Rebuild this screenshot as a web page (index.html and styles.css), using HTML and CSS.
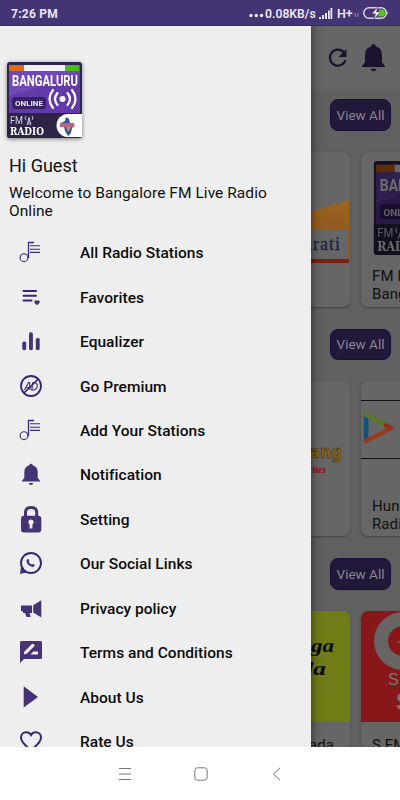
FILE: index.html
```
<!DOCTYPE html>
<html lang="en">
<head>
<meta charset="utf-8">
<title>Bangalore FM Live Radio</title>
<link rel="stylesheet" href="styles.css">
</head>
<body>
<svg class="defs" aria-hidden="true">
  <symbol id="logo" viewBox="0 0 75 76">
    <rect width="75" height="76" rx="3" fill="#2f2350"/>
    <rect x="2" y="3" width="71" height="48" fill="#7049b9"/>
    <path d="M2 34 73 12V51H2z" fill="#643aaa"/>
    <rect x="2" y="3" width="15" height="6" fill="#df6b12"/>
    <rect x="17" y="3" width="41" height="6" fill="#f2f0f5"/>
    <rect x="58" y="3" width="14" height="6" fill="#49bd15"/>
    <text x="5" y="24" font-family="Roboto" font-weight="700" font-size="14" textLength="66" lengthAdjust="spacingAndGlyphs" fill="#fff">BANGALURU</text>
    <rect x="5" y="35" width="34" height="12" rx="3" fill="#352265"/>
    <text x="8" y="44.300" font-family="Roboto" font-weight="700" font-size="8" textLength="28" lengthAdjust="spacingAndGlyphs" fill="#ece7f7">ONLINE</text>
    <circle cx="55.500" cy="37" r="3" fill="#fff"/>
    <path d="M50.500 31q-5 6 0 12M60.500 31q5 6 0 12M46 28q-7 9 0 18M65 28q7 9 0 18" fill="none" stroke="#fff" stroke-width="2.200" stroke-linecap="round"/>
    <rect y="51" width="75" height="25" rx="3" fill="#2c2347"/>
    <text x="3" y="61.500" font-family="Roboto" font-size="10" textLength="13" lengthAdjust="spacingAndGlyphs" fill="#d8d3e2">FM</text>
    <path d="M22 55v8M20 63l2-7 2 7M19 54q-2 2 0 4M25 54q2 2 0 4" fill="none" stroke="#c9c3d7"/>
    <text x="3" y="72.500" font-family="DejaVu Serif" font-weight="700" font-size="10.500" textLength="34" lengthAdjust="spacingAndGlyphs" fill="#fff">RADIO</text>
    <path d="M75 52V75H61a11.500 11.500 0 0 1 0-23z" fill="#fff"/>
    <path d="m59 55 3 2 1 4 5 2-3 3-1 5-3 3-3-5-1-5-3-3 4-2z" fill="#334f9f"/>
    <path d="M53 61h14v4H53z" fill="#b96582"/>
    <path d="M59 65h5l-3 5z" fill="#d68b5d"/>
  </symbol>
  <symbol id="music" viewBox="0 0 24 28">
    <g fill="none" stroke="#3a2b7c"><circle cx="5" cy="18.700" r="3.900" stroke-width="1.100"/><path d="M9.500 19V3.500H15" stroke-width="1.300"/><path d="M11 6.800h10M11 10.300h10M11 13.400h10" stroke-width="1.100"/></g>
  </symbol>
  <symbol id="bell" viewBox="0 0 18 22">
    <path d="M9 0q1.600 0 1.700 1.800 5 1.300 5 7.200v5.300L18 17.200V18H0v-.8L2.300 14.300V9q0-5.900 5-7.200Q7.400 0 9 0zM6.800 19.500h4.400Q10.800 21.500 9 21.500t-2.200-2z"/>
  </symbol>
</svg>

<div class="phone">
  <header class="status">
    <span class="clock">7:26 PM</span>
    <svg class="dots" viewBox="0 0 15 5"><circle cx="2" cy="2.500" r="1.700"/><circle cx="7.300" cy="2.500" r="1.700"/><circle cx="12.600" cy="2.500" r="1.700"/></svg>
    <span class="speed">0.08KB/s</span>
    <svg class="signal" viewBox="0 0 14 12"><path d="M0 9h2v2H0zM3 7h2v4H3zM6 5h2v6H6zM9 2.500h1.800V11H9zM11.500 0h1.800v11h-1.800z"/></svg>
    <span class="net">H+</span>
    <svg class="updown" viewBox="0 0 5 6"><path d="M1.200 5V1M3.800 1v4" stroke="#9a90bb" fill="none"/></svg>
    <svg class="battery" viewBox="0 0 26 12"><rect x=".8" y=".8" width="22.500" height="10.400" rx="5.200" fill="none" stroke="#d8d3e6" stroke-width="1.500"/><path d="M24.300 4v4q1.400-2 0-4z" fill="#d8d3e6"/><path d="M16 2.500h2.500a3.500 3.500 0 0 1 0 7H15z" fill="#55c811"/><path d="m14.800 0-6 6.700h3.700L11 12l6.200-7H13.400z" fill="#fff" stroke="#453473" stroke-width=".5"/></svg>
  </header>

  <main class="stage">
    <div class="page">
      <div class="toolbar">
        <svg class="refresh" viewBox="0 0 20 20"><path d="M16.300 4.800A8 8 0 1 0 17.600 12" fill="none" stroke="#1b132d" stroke-width="2.200"/><path d="M18.500 1v8h-8z" fill="#1b132d"/></svg>
        <svg class="alert" viewBox="0 0 18 22"><use href="#bell"/></svg>
      </div>

      <section class="group">
        <button class="view-all">View All</button>
        <div class="cards">
          <article class="card">
            <svg class="art" viewBox="0 0 140 111"><defs><linearGradient id="sun" x2="0" y2="1"><stop stop-color="#9b641d"/><stop offset="1" stop-color="#87501d"/></linearGradient></defs><path d="M80 66 139 48V111H80z" fill="url(#sun)"/><path d="M20 77h118v30H20z" fill="#666"/><path d="M20 107h119v4H20z" fill="#7a200d"/><text x="131" y="98" text-anchor="end" font-family="Liberation Serif" font-size="18" letter-spacing="1" fill="#1c2250" stroke="#1c2250" stroke-width=".3">Gujarati</text></svg>
          </article>
          <article class="card">
            <svg class="cover" viewBox="0 0 75 76"><use href="#logo"/></svg>
            <p class="name">FM Live<br>Bangalore</p>
          </article>
        </div>
      </section>

      <section class="group">
        <button class="view-all">View All</button>
        <div class="cards">
          <article class="card">
            <svg class="art" viewBox="0 0 140 111"><text x="132" y="77" text-anchor="end" font-family="DejaVu Sans" font-weight="700" font-size="17" textLength="44" lengthAdjust="spacingAndGlyphs" fill="#8b6413" stroke="#33270e" stroke-width=".5">Rang</text><text x="116" y="92" text-anchor="end" font-family="Liberation Serif" font-style="italic" font-weight="700" font-size="9.500" fill="#850c16">Favorites</text></svg>
          </article>
          <article class="card">
            <svg class="art" viewBox="0 0 140 111"><path d="M0 19.500h140M0 77.500h140" stroke="#111" stroke-width="1.200"/><g fill="none" stroke-width="4.500" stroke-linecap="round" stroke-linejoin="round"><path d="M5.200 34v26" stroke="#145176"/><path d="M5.200 60 30 47" stroke="#963c1c"/><path d="m5.200 34 24.800 13" stroke="#587727"/><path d="m25 44.400 5 2.600" stroke="#8c2f20"/></g></svg>
            <p class="name">Hungama<br>Radio</p>
          </article>
        </div>
      </section>

      <section class="group">
        <button class="view-all">View All</button>
        <div class="cards">
          <article class="card">
            <svg class="art" viewBox="0 0 140 111"><path d="M0 0h140v111H0z" fill="#727c17"/><g font-family="Liberation Serif" font-style="italic" font-weight="700" font-size="19" fill="#090a05" text-anchor="end"><text x="124" y="41" textLength="50" lengthAdjust="spacingAndGlyphs">Raga</text><text x="116" y="64" textLength="56" lengthAdjust="spacingAndGlyphs">Kada</text></g></svg>
            <p class="name right single">Kannada</p>
          </article>
          <article class="card">
            <svg class="art" viewBox="0 0 140 111"><path d="M0 0h140v111H0z" fill="#871719"/><circle cx="42" cy="30" r="22" fill="none" stroke="#686464" stroke-width="14"/><path d="m35 31 12-3v7z" fill="#686464"/><text x="27" y="74" font-family="Liberation Sans" font-size="16" fill="#777">S FM</text><text x="35" y="99" font-family="Liberation Sans" font-weight="700" font-size="24" fill="#777">S FM</text></svg>
            <p class="name single">S FM</p>
          </article>
        </div>
      </section>
    </div>

    <aside class="drawer">
      <svg class="logo" viewBox="0 0 75 76"><use href="#logo"/></svg>
      <h1>Hi Guest</h1>
      <p class="welcome">Welcome to Bangalore FM Live Radio<br>Online</p>
      <nav class="menu">
        <a class="item"><svg viewBox="0 0 24 28"><use href="#music"/></svg><span>All Radio Stations</span></a>
        <a class="item"><svg viewBox="0 0 24 28"><path d="M4.500 7h12.500M4.500 11.700h12.500M4.500 16.400h8" stroke="#38246f" stroke-width="2" stroke-linecap="round"/><path d="M18 21.200l-2.400-2.300q-1-1.900.7-2.600 1-.2 1.700.6.700-.8 1.700-.6 1.700.7.700 2.600z"/></svg><span>Favorites</span></a>
        <a class="item"><svg viewBox="0 0 24 28"><rect x="3.300" y="13.500" width="3.900" height="8.700" rx="1.700"/><rect x="10" y="4.200" width="3.900" height="18" rx="1.700"/><rect x="16.800" y="9.900" width="3.900" height="12.300" rx="1.700"/></svg><span>Equalizer</span></a>
        <a class="item"><svg viewBox="0 0 24 28"><circle cx="12" cy="13" r="10" fill="none" stroke="#38246f" stroke-width="1.800"/><g fill="none" stroke="#453473" stroke-width="1.200"><path d="m5.500 17 4-7.500h1l.5 7.500M7 14.500h4M13.800 9.500l-1 7.500q5 .5 5.500-4 .3-3.700-4.500-3.500z"/></g><path d="M5 20 19.200 6" stroke="#38246f" stroke-width="1.700"/></svg><span>Go Premium</span></a>
        <a class="item"><svg viewBox="0 0 24 28"><use href="#music"/></svg><span>Add Your Stations</span></a>
        <a class="item"><svg viewBox="0 0 24 28"><use href="#bell" x="3" y="2.500" width="18" height="22"/></svg><span>Notification</span></a>
        <a class="item"><svg viewBox="0 0 24 28"><path d="M6.500 11V6q.3-4.500 5.600-4.500T17.700 6v5" fill="none" stroke="#453473" stroke-width="3"/><rect x="2" y="9.700" width="20.300" height="16.700" rx="3"/><path d="M12 13.500a2.700 2.700 0 0 1 1.400 5V22.500h-2.800v-4a2.700 2.700 0 0 1 1.400-5z" fill="#eee"/></svg><span>Setting</span></a>
        <a class="item"><svg viewBox="0 0 24 28"><path d="M1 24l1-7 5.500 5.500z"/><circle cx="12" cy="13" r="10" fill="#eee" stroke="#38246f" stroke-width="1.900"/><path d="M8.200 9.300q1.100-1 1.800.5.700 1.200-.2 2 .8 2 2.900 2.800.8-1.100 2-.3 1.600.8.700 1.700-1.200 1.500-3.400.5-3.500-1.500-4.500-4.500-.4-1.800.7-2.700z"/></svg><span>Our Social Links</span></a>
        <a class="item"><svg viewBox="0 0 24 28"><path d="M2 10.500h11V18h-2.500l1.300 4H7.500L6 18H4v-1.800H2zM14.200 10.200 22.300 5.200V22.500L14.200 17.500z"/></svg><span>Privacy policy</span></a>
        <a class="item"><svg viewBox="0 0 24 28"><path d="M1 3.500Q1 2 2.500 2h19Q23 2 23 3.500v15Q23 20 21.500 20H5l-4 4z"/><path d="m5 15.500.2-2.700L13 5q1-.7 2 .3t.3 2L8 14.500zM11.500 15.500l2.800-3H19v3z" fill="#eee"/></svg><span>Terms and Conditions</span></a>
        <a class="item"><svg viewBox="0 0 24 28"><path d="M4.700 2.200 19 12.900 4.700 23.500z"/></svg><span>About Us</span></a>
        <a class="item"><svg viewBox="0 0 24 28"><path d="M12 22.500C5 16 2 13.500 2 9.600 2 6.500 4.300 4.300 7.200 4.300c2 0 3.800 1 4.800 2.700 1-1.700 2.800-2.700 4.800-2.700C19.700 4.300 22 6.500 22 9.600c0 3.900-3 6.400-10 12.900z" fill="none" stroke="#38246f" stroke-width="2"/></svg><span>Rate Us</span></a>
      </nav>
    </aside>
  </main>

  <footer class="softkeys">
    <svg viewBox="0 0 14 14"><path d="M1 1.500h12M1 7h12M1 12.500h12"/></svg>
    <svg viewBox="0 0 14 14"><rect x=".8" y=".8" width="12.400" height="12.400" rx="2.500"/></svg>
    <svg viewBox="0 0 14 14"><path d="M10 .8 3.500 7l6.500 6.200"/></svg>
  </footer>
</div>
</body>
</html>
```
FILE: styles.css
```
* { box-sizing: border-box; }
body { margin: 0; font-family: Roboto, sans-serif; color: #111; }
.defs { display: none; }
.phone { width: 400px; height: 800px; display: flex; flex-direction: column; overflow: hidden; background: #fff; }
.status { height: 26px; flex: none; display: flex; align-items: center; padding: 2px 11px 0 11px; background: #453473; border-bottom: 1px solid #37286a; color: #e8e5f0; font-size: 12px; font-weight: 700; white-space: nowrap; }
.status svg { flex: none; fill: #e8e5f0; }
.clock { flex: 1; letter-spacing: .25px; }
.dots { width: 15px; height: 5px; margin: 4px 1px 0 0; }
.speed { width: 51px; font-size: 12.200px; font-weight: 600; }
.signal { width: 14px; height: 12px; margin: 0 4px 0 3px; }
.net { font-weight: 600; width: 17px; font-size: 12.500px; }
.updown { width: 5px; height: 6px; margin: 3px 4px 0 0; }
.battery { width: 26px; height: 12px; margin-bottom: 2px; }
.stage { position: relative; height: 721px; flex: none; overflow: hidden; background: #606060; }
.toolbar { height: 63px; display: flex; justify-content: flex-end; align-items: center; padding-right: 15px; gap: 14px; background: #666; }
.refresh { width: 20px; height: 20px; }
.alert { width: 23px; height: 28px; fill: #1b132d; }
.group { height: 229.500px; padding-top: 10px; display: flex; flex-direction: column; }
.view-all { align-self: flex-end; margin: 0 9px 21px 0; width: 61px; height: 31.500px; flex: none; padding: 0; border: 1px solid #1a0f3c; border-radius: 8px; background: #21183a; color: #8b8792; font: 13.500px Roboto, sans-serif; white-space: nowrap; }
.cards { display: flex; gap: 11px; padding-left: 210px; width: 511px; }
.card { width: 140px; height: 155px; flex: none; border-radius: 7px; background: #666; box-shadow: 0 1px 2px #444; overflow: hidden; display: flex; flex-direction: column; }
.art { width: 140px; height: 111px; flex: none; }
.cover { width: 94px; height: 94px; flex: none; margin: 9px 0 7px 12px; filter: brightness(.42); }
.name { margin: 5px 11px 0; font-size: 15px; line-height: 18px; color: #111; letter-spacing: .1px; }
.right { text-align: right; margin-right: 16px; }
.single { margin-top: 14px; }
.drawer { position: absolute; inset: 0 auto 0 0; width: 311px; padding-top: 36px; background: #eee; box-shadow: 0 0 10px rgba(0, 0, 0, .6); }
.logo { display: block; width: 75px; height: 76px; margin-left: 7px; filter: drop-shadow(0 1px 2px #777); }
h1 { margin: 16px 0 0 9px; font-size: 18px; line-height: 24px; font-weight: 400; letter-spacing: 0; }
.welcome { margin: 6px 0 0 9px; font-size: 15.500px; line-height: 18px; letter-spacing: .05px; white-space: nowrap; }
.menu { margin-top: 11px; }
.item { height: 44.450px; display: flex; align-items: center; padding-left: 19px; gap: 37px; font-size: 15.500px; font-weight: 500; color: #0c0c0c; letter-spacing: .03px; white-space: nowrap; }
.item svg { width: 24px; height: 28px; flex: none; fill: #453473; }
.softkeys { height: 53px; display: flex; align-items: center; gap: 62px; padding-left: 118px; background: #fff; }
.softkeys svg { width: 14px; height: 14px; fill: none; stroke: #777; stroke-width: 1; }
```
